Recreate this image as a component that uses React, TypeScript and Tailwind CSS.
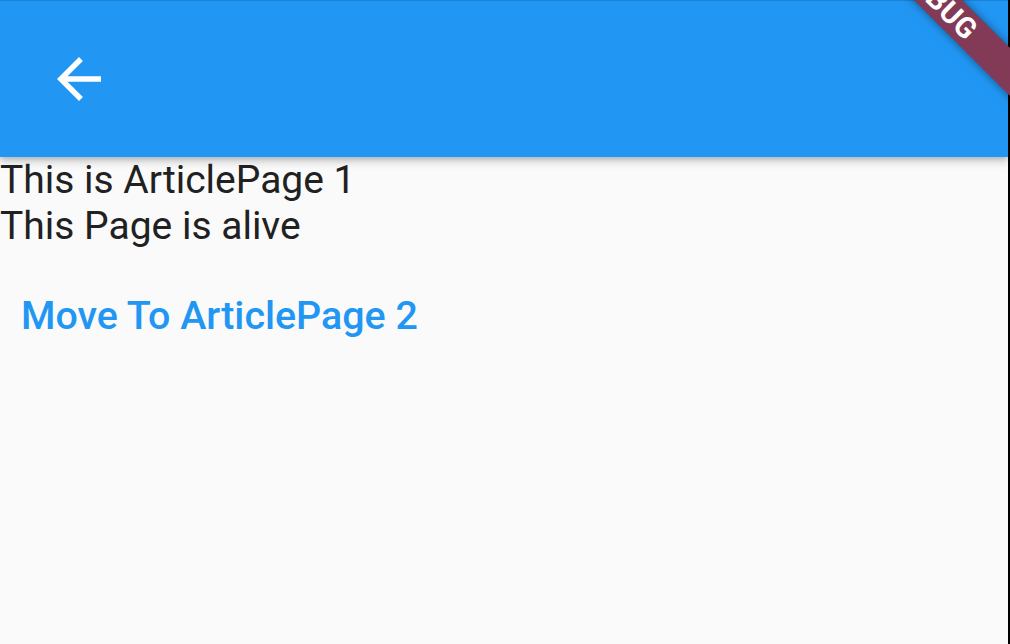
import React from "react";

function BackArrow() {
  return (
    <svg viewBox="0 0 24 24" className="h-[66px] w-[66px]" fill="white">
      <path d="M20 11H7.83l5.59-5.59L12 4l-8 8 8 8 1.41-1.41L7.83 13H20v-2z" />
    </svg>
  );
}

function DebugBanner() {
  // sits over the app bar corner, rotated 45deg like Flutter's debug banner
  return (
    <div className="pointer-events-none absolute left-[808px] top-[-16px] z-20 h-[34px] w-[262px] rotate-45">
      <div className="flex h-full w-full items-center justify-center bg-[#823a57] shadow-[0_0_8px_rgba(0,0,0,0.45)]">
        <span className="text-[29px] font-bold leading-none tracking-[0.5px] text-white [font-family:Roboto,'Liberation_Sans',sans-serif]">
          DEBUG
        </span>
      </div>
    </div>
  );
}

export default function App() {
  return (
    <div className="relative h-[644px] w-[1010px] overflow-hidden bg-[#fafafa] [font-family:Roboto,'Liberation_Sans',sans-serif]">
      <div className="flex h-full flex-col border-r-2 border-black">
        {/* App bar */}
        <header className="relative z-10 flex h-[157px] items-center border-t border-[#1b82d6] bg-[#2196f3] pl-[46px] shadow-[0_5px_8px_rgba(0,0,0,0.18),0_2px_4px_rgba(0,0,0,0.12)]">
          <button className="flex items-center justify-center">
            <BackArrow />
          </button>
        </header>

        {/* Body */}
        <main className="flex flex-col pt-[1px]">
          <p className="text-[39px] leading-[45.5px] text-[#212121]">This is ArticlePage 1</p>
          <p className="text-[39px] leading-[45.5px] text-[#212121]">This Page is alive</p>
          <div className="pl-[21px] pt-[44px]">
            <button className="text-[39.4px] font-medium leading-[45.5px] text-[#2196f3]">
              Move To ArticlePage 2
            </button>
          </div>
        </main>
      </div>
      <DebugBanner />
    </div>
  );
}
